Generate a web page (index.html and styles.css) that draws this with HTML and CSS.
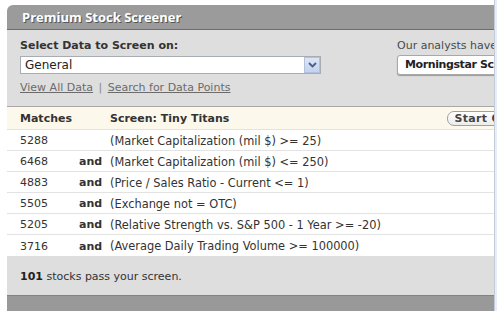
FILE: index.html
```html
<!DOCTYPE html>
<html>
<head>
<meta charset="utf-8">
<link rel="stylesheet" href="styles.css">
</head>
<body>
<div class="page">
  <div class="viewport">
    <div class="screener">
      <div class="titlebar"><h1 class="title">Premium Stock Screener</h1></div>
      <div class="controls">
        <div class="col-left">
          <div class="label">Select Data to Screen on:</div>
          <div class="select">
            <span class="select-text">General</span>
            <span class="select-btn">
              <svg width="9" height="6" viewBox="0 0 9 6"><path d="M1 1 L4.5 4.5 L8 1" fill="none" stroke="#4a5f86" stroke-width="1.8"/></svg>
            </span>
          </div>
          <div class="links"><a href="#">View All Data</a> <span class="sep">|</span> <a href="#">Search for Data Points</a></div>
        </div>
        <div class="col-right">
          <div class="note">Our analysts have created these screens</div>
          <div class="ms-btn">Morningstar Screens</div>
        </div>
      </div>
      <div class="table">
        <div class="row head">
          <div class="c-match">Matches</div>
          <div class="c-and"></div>
          <div class="c-crit">
            <span>Screen: Tiny Titans</span>
            <span class="start-btn">Start Over</span>
          </div>
        </div>
        <div class="row"><div class="c-match">5288</div><div class="c-and"></div><div class="c-crit">(Market Capitalization (mil $) &gt;= 25)</div></div>
        <div class="row"><div class="c-match">6468</div><div class="c-and">and</div><div class="c-crit">(Market Capitalization (mil $) &lt;= 250)</div></div>
        <div class="row"><div class="c-match">4883</div><div class="c-and">and</div><div class="c-crit">(Price / Sales Ratio - Current &lt;= 1)</div></div>
        <div class="row"><div class="c-match">5505</div><div class="c-and">and</div><div class="c-crit">(Exchange not = OTC)</div></div>
        <div class="row"><div class="c-match">5205</div><div class="c-and">and</div><div class="c-crit">(Relative Strength vs. S&amp;P 500 - 1 Year &gt;= -20)</div></div>
        <div class="row last"><div class="c-match">3716</div><div class="c-and">and</div><div class="c-crit">(Average Daily Trading Volume &gt;= 100000)</div></div>
      </div>
      <div class="footer"><b>101</b> stocks pass your screen.</div>
      <div class="bottom"></div>
    </div>
  </div>
  <div class="edge"></div>
</div>
</body>
</html>
```
FILE: styles.css
```css
html, body {
  margin: 0;
  padding: 0;
  background: #ffffff;
}
body {
  font-family: "DejaVu Sans", Verdana, sans-serif;
  font-size: 11px;
  color: #333333;
}
.page {
  display: flex;
  height: 311px;
  overflow: hidden;
}
.viewport {
  width: 487px;
  margin-left: 7px;
  padding-top: 5px;
  overflow: hidden;
}
.screener {
  width: 487px;
}
.titlebar {
  height: 24px;
  background: #9b9b9b;
  border-top-left-radius: 6px;
  border-bottom: 1px solid #6e6e6e;
  padding-left: 15px;
  display: flex;
  align-items: center;
}
.title {
  margin: 0;
  font-family: "Open Sans", sans-serif;
  font-size: 13px;
  font-weight: bold;
  color: #ffffff;
  text-shadow: 1px 1px 0 #555555;
  white-space: nowrap;
  line-height: 1;
}
.controls {
  background: #dedede;
  display: grid;
  grid-template-columns: 377px auto;
  padding: 9px 0 12px 13px;
  border-bottom: 1px solid #a9a9a9;
  height: 55px;
  overflow: hidden;
}
.label {
  font-weight: bold;
  line-height: 13px;
  color: #333;
}
.select {
  margin-top: 4px;
  width: 301px;
  height: 18px;
  box-sizing: border-box;
  border: 1px solid #a8adb3;
  background: #ffffff;
  display: flex;
  align-items: center;
  justify-content: space-between;
  padding-left: 4px;
}
.select-text {
  font-size: 12px;
  color: #222;
}
.select-btn {
  width: 16px;
  height: 16px;
  box-sizing: border-box;
  border: 1px solid #b3c2dc;
  background: linear-gradient(#dde6f6, #c4d2ee);
  display: flex;
  align-items: center;
  justify-content: center;
}
.links {
  margin-top: 7px;
  line-height: 13px;
  color: #777;
}
.links a {
  color: #6b6b6b;
  text-decoration: underline;
}
.sep {
  color: #888;
  padding: 0 2px;
}
.col-right {
  white-space: nowrap;
}
.note {
  line-height: 13px;
  color: #4a4a4a;
}
.ms-btn {
  margin-top: 3px;
  display: inline-block;
  height: 20px;
  box-sizing: border-box;
  border: 1px solid #a8a8a8;
  border-radius: 3px 0 0 3px;
  background: #ffffff;
  box-shadow: 0 1px 1px #9a9a9a;
  padding: 0 7px;
  font-weight: bold;
  line-height: 18px;
  letter-spacing: -0.4px;
  color: #222;
}
.table {
  background: #ffffff;
}
.row {
  display: grid;
  grid-template-columns: 59px 20px 1fr;
  padding-left: 13px;
  height: 21px;
  box-sizing: border-box;
  border-bottom: 1px solid #e3e3e3;
  align-items: center;
  white-space: nowrap;
  padding-top: 1px;
}
.row.last {
  border-bottom: none;
}
.row.head {
  height: 23px;
  background: #fdf8ec;
  border-bottom: 1px solid #e6e2d8;
  font-weight: bold;
}
.c-and {
  font-weight: bold;
  text-align: right;
}
.c-crit {
  padding-left: 11px;
  display: flex;
  align-items: center;
  font-size: 11.4px;
}
.row.head .c-crit {
  font-size: 11px;
}
.c-crit > span:first-child {
  flex: 1;
}
.start-btn {
  flex: none;
  margin-right: -35px;
  height: 15px;
  box-sizing: border-box;
  border: 1px solid #a0a0a0;
  border-radius: 7px;
  background: linear-gradient(#ffffff, #ececec);
  padding: 0 6px;
  font-weight: bold;
  font-size: 11px;
  line-height: 13px;
  letter-spacing: 0.3px;
  color: #444;
}
.footer {
  background: #dedede;
  height: 39px;
  box-sizing: border-box;
  padding: 14px 0 0 13px;
  line-height: 13px;
  color: #333;
}
.footer b {
  color: #222;
}
.bottom {
  height: 16px;
  background: #999999;
  border-top: 1px solid #838383;
}
.edge {
  width: 3px;
  background: #e6edf8;
  border-left: 1px solid #c4ccd8;
  box-sizing: border-box;
}
```
